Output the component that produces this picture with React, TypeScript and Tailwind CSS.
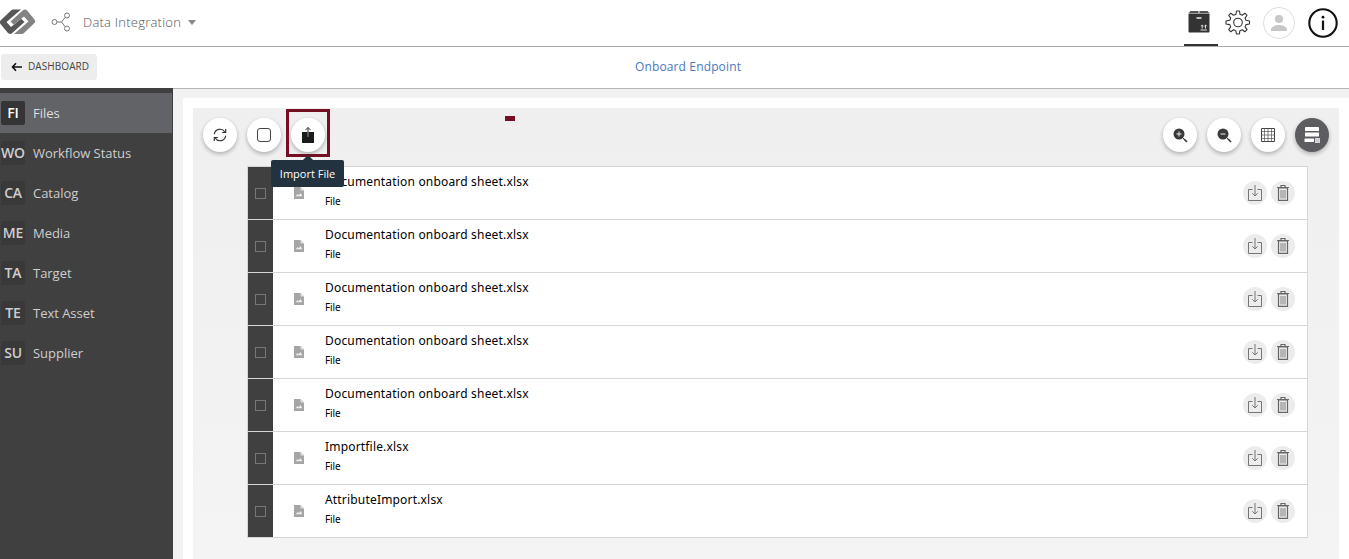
import React from "react";

const nav = [
  ["FI", "Files"],
  ["WO", "Workflow Status"],
  ["CA", "Catalog"],
  ["ME", "Media"],
  ["TA", "Target"],
  ["TE", "Text Asset"],
  ["SU", "Supplier"],
];

const files = [
  "Documentation onboard sheet.xlsx",
  "Documentation onboard sheet.xlsx",
  "Documentation onboard sheet.xlsx",
  "Documentation onboard sheet.xlsx",
  "Documentation onboard sheet.xlsx",
  "Importfile.xlsx",
  "AttributeImport.xlsx",
];

function Logo() {
  return (
    <svg width="36" height="26" viewBox="0 0 36 26">
      <path d="M13 .5H21L6.500 13L11 18L21.200 9.700L24.500 13L12 24.300Q9.500 25.800 7.500 23.500L.5 15Q-1 12.800 .8 11.200L11 1.500Q12 .5 13 .5Z" fill="#575757" />
      <path d="M22 25H14L28.500 12.500L24 7.500L13.800 15.800L10.500 12.500L23 1.200Q25.500-.3 27.500 2L34.500 10.500Q36 12.700 34.200 14.300L24 24Q23 25 22 25Z" fill="#838383" />
    </svg>
  );
}

function ShareIcon() {
  return (
    <svg width="20" height="20" viewBox="0 0 20 20" fill="none" stroke="#777" strokeWidth="1">
      <circle cx="3.5" cy="10" r="2.5" />
      <circle cx="16" cy="3.5" r="2.5" />
      <circle cx="16" cy="16.5" r="2.5" />
      <path d="M6 10h4.5L14.2 5.3M10.5 10l3.7 4.7" />
    </svg>
  );
}

function BoxIcon() {
  return (
    <svg width="22" height="22" viewBox="0 0 22 22">
      <path d="M2.5 0H10.5V2H0.8ZM11.5 0H19.5L21.2 2H11.5Z" fill="#555" />
      <path d="M0.5 2.5H21.5V20.5Q21.5 21.5 20.5 21.5H1.5Q.5 21.5 .5 20.5Z" fill="#333" />
      <path d="M8.5 7h5" stroke="#fff" strokeWidth="1.4" />
      <path d="M12.5 19h6.5M14.2 17.5v-3.3M17.5 17.5v-3.3M13 15.2l1.2-1.2 1.2 1.2M16.3 15.2l1.2-1.2 1.2 1.2" stroke="#ddd" strokeWidth="1" fill="none" />
    </svg>
  );
}

function GearIcon() {
  return (
    <svg width="26" height="26" viewBox="0 0 26 26" fill="none" stroke="#333" strokeWidth="1.1" strokeLinejoin="round">
      <path d="M11.5 1h3l.5 3.3 2.2.9 2.7-2 2.1 2.1-1.9 2.8.9 2.2 3.5.7v3l-3.5.6-.9 2.3 2 2.7-2.2 2.2-2.7-2-2.3.9-.5 3.3h-3l-.6-3.3-2.2-.9-2.8 2-2.1-2.2 2-2.7-.9-2.3L1 14v-3l3.8-.7.9-2.2-2-2.8 2.1-2.1 2.8 2 2.3-.9z" />
      <circle cx="13" cy="12.5" r="4.3" />
    </svg>
  );
}

function UserIcon() {
  return (
    <svg width="32" height="32" viewBox="0 0 32 32">
      <circle cx="16" cy="16" r="15.5" fill="#fff" stroke="#ddd" />
      <circle cx="16" cy="12" r="4.1" fill="#c8c8c8" />
      <path d="M8 24v-1.7c0-3 5.2-4.4 8-4.4s8 1.400 8 4.400V24z" fill="#c8c8c8" />
    </svg>
  );
}

function InfoIcon() {
  return (
    <svg width="30" height="30" viewBox="0 0 30 30">
      <circle cx="15" cy="15" r="13.7" fill="#fff" stroke="#111" strokeWidth="2.1" />
      <circle cx="15" cy="9.200" r="1.400" fill="#111" />
      <path d="M15 12.500V22" stroke="#111" strokeWidth="2.200" />
    </svg>
  );
}

function RoundButton({ dark, children }: { dark?: boolean; children: React.ReactNode }) {
  return (
    <div
      className={
        "flex size-[34px] items-center justify-center rounded-full shadow-[0_2px_4px_rgba(0,0,0,0.27)] " +
        (dark ? "bg-[#5d5d61]" : "bg-white")
      }
    >
      {children}
    </div>
  );
}

function RefreshIcon() {
  return (
    <svg width="14" height="14" viewBox="0 0 14 14" fill="none" stroke="#333" strokeWidth="1.200">
      <path d="M1.300 6.300A5.700 5.700 0 0 1 11.800 4M12.700 7.700A5.700 5.700 0 0 1 2.200 10" />
      <path d="M12.700 1v3.500H9.200M1.300 13V9.500h3.500" />
    </svg>
  );
}

function ImportIcon() {
  return (
    <svg width="14" height="18" viewBox="0 0 14 18" fill="none">
      <path d="M1 6h12v11H1z" fill="#1c1c1c" />
      <path d="M7 6V1.500" stroke="#333" />
      <path d="M7 6v5" stroke="#999" />
      <path d="M4.500 4L7 1.500 9.500 4" stroke="#333" />
    </svg>
  );
}

function ZoomIcon({ plus }: { plus?: boolean }) {
  return (
    <svg width="15" height="15" viewBox="0 0 15 15" fill="none">
      <circle cx="6" cy="6" r="5.500" fill="#3a3a3a" />
      <path d="M9.500 9.500l1.500 1.500" stroke="#3a3a3a" />
      <path d="M11 11l3 3" stroke="#3a3a3a" strokeWidth="1.700" />
      <path d="M3.500 6h5" stroke="#eee" strokeWidth="1" />
      {plus && <path d="M6 3.500v5" stroke="#eee" strokeWidth="1" />}
    </svg>
  );
}

function GridIcon() {
  return (
    <svg width="14" height="14" viewBox="0 0 14 14" fill="none">
      <path d="M.5.5h13v13H.5z" stroke="#444" />
      <path d="M.5 3.500h13M.5 7h13M.5 10.500h13M3.500.5v13M7 .5v13M10.500.5v13" stroke="#555" strokeWidth=".7" />
    </svg>
  );
}

function ListIcon() {
  return (
    <svg width="16" height="16" viewBox="0 0 16 16" fill="#fff">
      <rect x="1" y="0" width="14" height="4" rx=".5" />
      <rect x="1" y="5.500" width="14" height="4" rx=".5" />
      <rect x="0.500" y="11.500" width="9.500" height="3.500" rx=".5" />
      <rect x="11" y="11" width="5" height="5" rx=".5" fill="#e8e8e8" />
      <path d="M12.700 11v5M14.400 11v5M11 12.700h5M11 14.400h5" stroke="#aaa" strokeWidth=".4" />
    </svg>
  );
}

function FileIcon() {
  return (
    <svg width="10" height="12" viewBox="0 0 10 12">
      <path d="M0 0h6.500L10 3.500V12H0z" fill="#a5a5a5" />
      <path d="M6.500 0v3.500H10" fill="#ddd" />
      <path d="M1.800 9.300l1.700-2.300 1.300 1.200 1.700-2.200 1.800 3.300z" fill="#f0f0f0" />
    </svg>
  );
}

function DownloadIcon() {
  return (
    <svg width="14" height="16" viewBox="0 0 14 16" fill="none" stroke="#757575" strokeWidth="1">
      <path d="M4.500 4.500H.5v11h13v-11H9.500M7 0v11M4.300 8.300L7 11l2.700-2.700" />
    </svg>
  );
}

function TrashIcon() {
  return (
    <svg width="12" height="16" viewBox="0 0 12 16" fill="none" stroke="#666">
      <path d="M1.500 3h9v12.300h-9z" strokeWidth="1.200" />
      <path d="M0 2.500h12M4 2V.5h4V2" strokeWidth="1.200" />
      <path d="M4 5v8.500M6 5v8.500M8 5v8.500" strokeWidth=".8" />
    </svg>
  );
}

function FileRow({ name }: { name: string }) {
  return (
    <div className="flex h-[53px] border-b border-[#d6d6d6] bg-white">
      <div className="flex w-[25px] shrink-0 items-center justify-center bg-[#404040]">
        <div className="size-[11px] border border-[#777]" />
      </div>
      <div className="flex w-[52px] shrink-0 items-center justify-center">
        <FileIcon />
      </div>
      <div className="flex grow flex-col pt-[6px] text-black">
        <div className="font-['Noto_Sans',sans-serif] text-[12px] leading-[18px] tracking-[0.180px]">{name}</div>
        <div className="mt-[3px] font-['Noto_Sans',sans-serif] text-[10px] leading-[14px] tracking-[-0.100px]">File</div>
      </div>
      <div className="flex items-center gap-1 pr-[12px]">
        <div className="flex size-6 items-center justify-center rounded-full bg-[#ececec]">
          <DownloadIcon />
        </div>
        <div className="flex size-6 items-center justify-center rounded-full bg-[#ececec]">
          <TrashIcon />
        </div>
      </div>
    </div>
  );
}

export default function App() {
  return (
    <div className="flex h-[559px] w-[1349px] flex-col overflow-hidden bg-white font-['Open_Sans',sans-serif]">
      <header className="flex h-[47px] shrink-0 items-center border-b border-[#ababab]">
        <div className="-mt-[3px] w-[51px]">
          <Logo />
        </div>
        <div className="-mt-[2px] flex items-center">
          <ShareIcon />
          <span className="mt-px ml-[12px] w-[98px] text-[13px] font-light tracking-[0.230px] whitespace-nowrap text-[#555]">
            Data Integration
          </span>
          <span className="ml-[7px] border-x-[4px] border-t-[5px] border-x-transparent border-t-[#888]" />
        </div>
        <div className="ml-auto flex h-full items-center pr-[11px]">
          <div className="flex h-full w-[34px] items-start justify-center border-b-2 border-[#333] pt-[11px] pr-[4px]">
            <BoxIcon />
          </div>
          <div className="ml-[7px] flex items-center">
            <GearIcon />
            <div className="ml-[12px]">
              <UserIcon />
            </div>
            <div className="ml-[13px]">
              <InfoIcon />
            </div>
          </div>
        </div>
      </header>

      <div className="grid h-[42px] shrink-0 grid-cols-[1fr_auto_1fr] items-center border-b border-[#b5b5b5]">
        <div className="mb-px ml-px flex h-[26px] w-[96px] items-center rounded-[3px] bg-[#ededed] pl-[10px]">
          <svg width="12" height="10" viewBox="0 0 12 10" fill="none" stroke="#111" strokeWidth="1.600">
            <path d="M11 5H1.500M5 1.200L1.500 5 5 8.800" />
          </svg>
          <span className="mb-px ml-[5px] text-[10px] tracking-[0.080px] text-[#444]">DASHBOARD</span>
        </div>
        <div className="mb-[2px] pl-[27px] text-[12px] tracking-[0.140px] text-[#4a78bd]">Onboard Endpoint</div>
        <div />
      </div>

      <div className="-mt-px flex min-h-0 grow">
        <nav className="w-[173px] shrink-0 bg-[#404040] pt-[5px]">
          {nav.map(([code, label], i) => (
            <div
              key={code}
              className={
                "mr-px flex h-10 items-center pl-px text-[13px] " +
                (i === 0 ? "bg-[#626366] text-[#dedede]" : "text-[#cecece]")
              }
            >
              <div
                className={
                  "flex size-6 items-center justify-center rounded-[2px] text-[14px] leading-none font-semibold tracking-[-0.200px] " +
                  (i === 0 ? "bg-[#353535] text-white" : "bg-[#393939] text-[#cecece]")
                }
              >
                {code}
              </div>
              <span className="mt-[2px] ml-[8px] tracking-[-0.030px]">{label}</span>
            </div>
          ))}
        </nav>

        <main className="mt-px flex grow bg-[#f2f2f2] pt-[9px] pl-[10px]">
          <div className="flex grow bg-white px-[10px] pt-[10px]">
            <div className="relative flex grow flex-col bg-linear-to-b from-[#efefef] to-[#f4f4f4] pr-[31px] pl-[54px]">
              <div className="-mr-[21px] -ml-[44px] flex h-[58px] items-start justify-between pt-[10px]">
                <div className="flex gap-[10px]">
                  <RoundButton>
                    <RefreshIcon />
                  </RoundButton>
                  <RoundButton>
                    <div className="size-[14px] rounded-[3px] border-[1.5px] border-[#444]" />
                  </RoundButton>
                  <div className="relative">
                    <RoundButton>
                      <ImportIcon />
                    </RoundButton>
                    <div className="absolute -top-[9px] -left-[5px] h-[48px] w-[44px] border-[3px] border-[#740f24]" />
                    <div className="absolute top-[39px] left-[12px] z-10 size-[10px] rotate-45 bg-[#22323e]" />
                    <div className="absolute top-[42px] -left-[20px] z-10 flex h-[27px] w-[73px] items-center justify-center rounded-[2px] bg-[#22323e] pt-px text-[11px] font-medium whitespace-nowrap text-white">
                      Import File
                    </div>
                  </div>
                </div>
                <div className="flex gap-[10px]">
                  <RoundButton>
                    <ZoomIcon plus />
                  </RoundButton>
                  <RoundButton>
                    <ZoomIcon />
                  </RoundButton>
                  <RoundButton>
                    <GridIcon />
                  </RoundButton>
                  <RoundButton dark>
                    <ListIcon />
                  </RoundButton>
                </div>
              </div>
              <div className="absolute top-[8px] left-[312px] h-[5px] w-[10px] bg-[#740f24]" />
              <div className="border-t border-r border-l border-[#d6d6d6]">
                {files.map((name, i) => (
                  <FileRow key={i} name={name} />
                ))}
              </div>
            </div>
          </div>
        </main>
      </div>
    </div>
  );
}
